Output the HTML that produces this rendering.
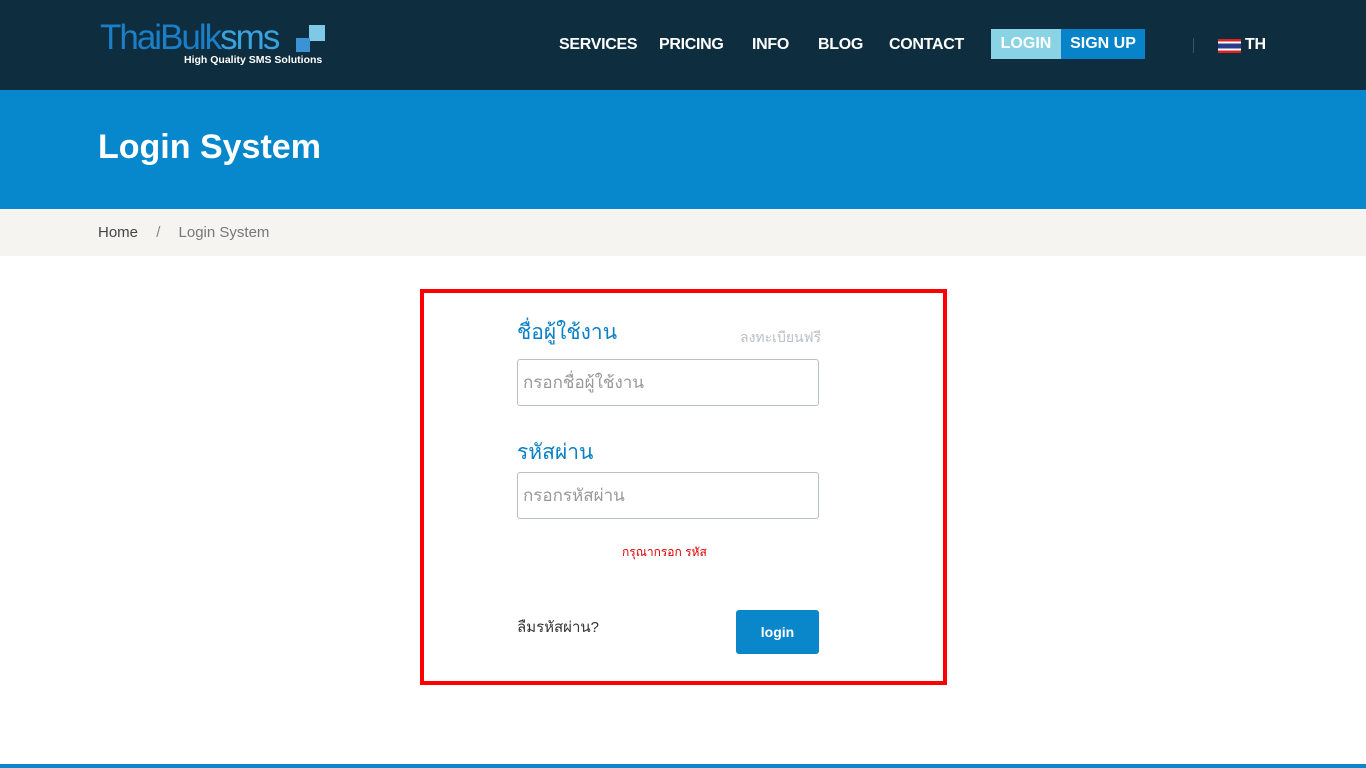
<!DOCTYPE html>
<html><head><meta charset="utf-8"><style>
*{margin:0;padding:0;box-sizing:border-box}
body{width:1366px;height:768px;overflow:hidden;background:#fff;font-family:"Liberation Sans",sans-serif;position:relative}
.hdr{position:absolute;top:0;left:0;width:1366px;height:90px;background:#0e2d3f}
.logo{position:absolute;left:100px;top:18px;color:#1a7fc6;font-size:35px;letter-spacing:-2px;line-height:40px}
.logo b{font-weight:normal;color:#3aa2dc}
.tag{position:absolute;left:184px;top:54px;color:#fff;font-size:10.5px;font-weight:bold}
.sq1{position:absolute;left:309px;top:25px;width:16px;height:16px;background:#7fc8e6}
.sq2{position:absolute;left:296px;top:38px;width:14px;height:14px;background:#3b92d4}
.nav{position:absolute;top:36px;color:#fff;font-size:16px;font-weight:bold;letter-spacing:-0.3px}
.btn{position:absolute;top:29px;height:30px;color:#fff;font-size:16px;font-weight:bold;line-height:30px;text-align:center}
.ban{position:absolute;top:90px;left:0;width:1366px;height:119px;background:#0888cc}
.ban h1{position:absolute;left:98px;top:38px;color:#fff;font-size:34px}
.bc{position:absolute;top:209px;left:0;width:1366px;height:47px;background:#f5f4f0;font-size:15px;color:#444;line-height:47px;padding-left:98px}
.box{position:absolute;left:420px;top:289px;width:527px;height:396px;border:4px solid #f00}
.lbl{position:absolute;left:517px;color:#0a80c6;font-size:21px}
.inp{position:absolute;left:517px;width:302px;height:47px;border:1px solid #b8c0c8;border-radius:3px;color:#999;font-size:17px;line-height:45px;padding-left:5px}
</style></head><body>
<div class="hdr">
<div class="logo">ThaiBulk<b>sms</b></div><div class="sq1"></div><div class="sq2"></div>
<div class="tag">High Quality SMS Solutions</div>
<div class="nav" style="left:559px">SERVICES</div>
<div class="nav" style="left:659px">PRICING</div>
<div class="nav" style="left:752px">INFO</div>
<div class="nav" style="left:818px">BLOG</div>
<div class="nav" style="left:889px">CONTACT</div>
<div class="btn" style="left:991px;width:70px;background:#8ad3e4">LOGIN</div>
<div class="btn" style="left:1061px;width:84px;background:#0683c9">SIGN UP</div>
<div style="position:absolute;left:1193px;top:38px;width:1px;height:15px;background:#3b5564"></div>
<div style="position:absolute;left:1218px;top:39px;width:23px;height:14px;background:linear-gradient(#d22 0 17%,#fff 17% 33%,#2a3a8c 33% 67%,#fff 67% 83%,#d22 83%)"></div>
<div class="nav" style="left:1245px">TH</div>
</div>
<div class="ban"><h1>Login System</h1></div>
<div class="bc">Home <span style="color:#888;margin:0 14px">/</span> <span style="color:#777">Login System</span></div>
<div class="box"></div>
<div class="lbl" style="top:316px">ชื่อผู้ใช้งาน</div>
<div style="position:absolute;left:740px;top:327px;color:#b8bfc5;font-size:14px">ลงทะเบียนฟรี</div>
<div class="inp" style="top:359px">กรอกชื่อผู้ใช้งาน</div>
<div class="lbl" style="top:436px">รหัสผ่าน</div>
<div class="inp" style="top:472px">กรอกรหัสผ่าน</div>
<div style="position:absolute;left:622px;top:543px;color:#d00;font-size:12px">กรุณากรอก รหัส</div>
<div style="position:absolute;left:517px;top:615px;color:#333;font-size:15px">ลืมรหัสผ่าน?</div>
<div style="position:absolute;left:736px;top:610px;width:83px;height:44px;background:#0a87cb;border-radius:3px;color:#fff;font-size:14px;font-weight:bold;text-align:center;line-height:44px">login</div>
<div style="position:absolute;left:0;top:764px;width:1366px;height:4px;background:#0a87cb"></div>
</body></html>
